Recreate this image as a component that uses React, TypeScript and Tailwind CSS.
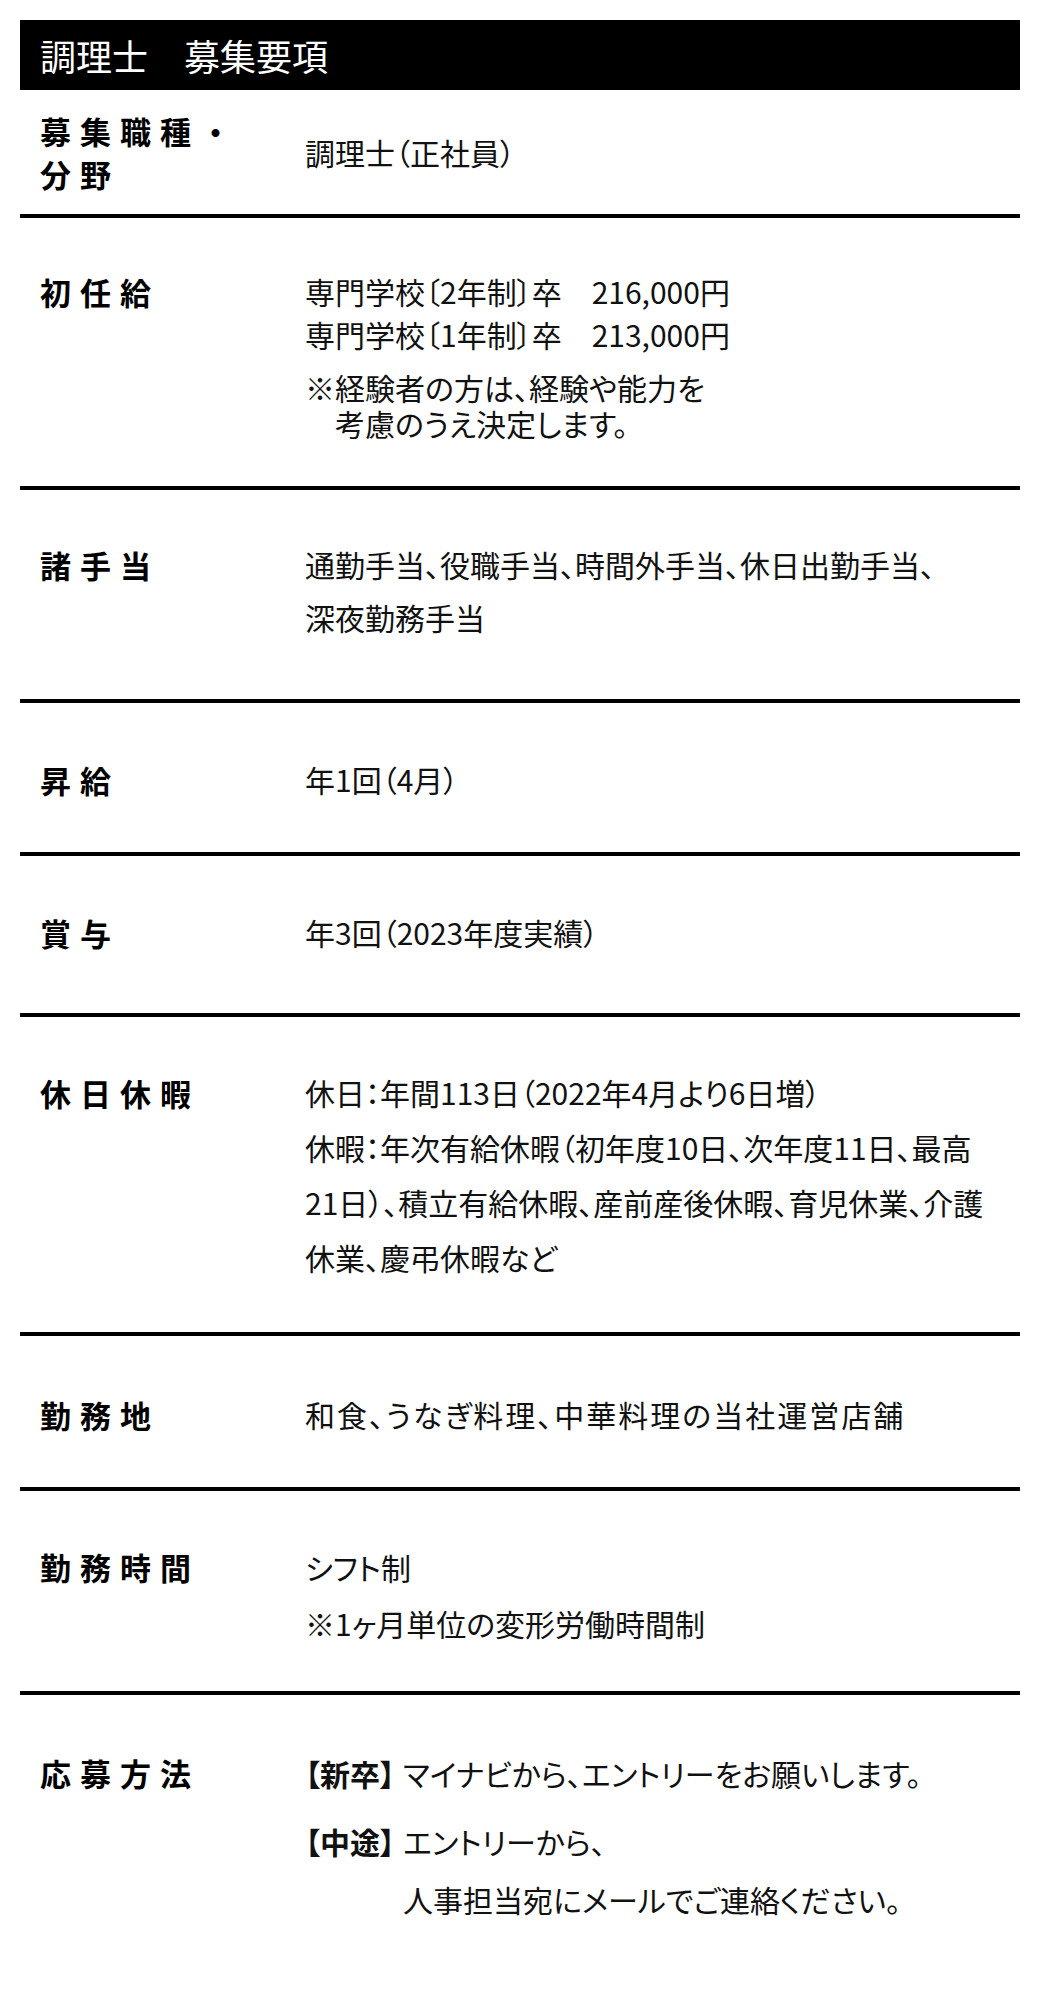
import clsx from "clsx";
import type { ReactNode } from "react";

const jp = "font-['Noto_Sans_CJK_JP','Noto_Sans',sans-serif]";

type RowProps = {
  label: ReactNode;
  pad: string;
  lead: string;
  center?: boolean;
  last?: boolean;
  children: ReactNode;
};

function Row({ label, pad, lead, center, last, children }: RowProps) {
  return (
    <div
      className={clsx(
        "flex",
        pad,
        center ? "items-center" : "items-start",
        !last && "border-b-4 border-black"
      )}
    >
      <div
        className={clsx(
          "w-[285px] shrink-0 pl-[20px] text-[31px] font-bold tracking-[9px] text-black",
          lead
        )}
      >
        {label}
      </div>
      {/* proportional punctuation, like the typeset original */}
      <div className={clsx("flex-1 text-[30px] text-[#111] [font-feature-settings:'palt']", lead)}>
        {children}
      </div>
    </div>
  );
}

export default function App() {
  return (
    <div className={clsx("min-h-[1996px] w-[1040px] bg-white px-[20px] pt-[20px]", jp)}>
      {/* Title bar */}
      <div className="flex h-[70px] items-center bg-black pl-[20px] text-[36px] font-normal leading-none text-white">
        調理士　募集要項
      </div>

      <Row
        label={
          <>
            募集職種・
            <br />
            分野
          </>
        }
        pad="py-[19px]"
        lead="leading-[43px]"
        center
      >
        調理士（正社員）
      </Row>

      <Row label="初任給" pad="pt-[52px] pb-[45px]" lead="leading-[43px]">
        <div>専門学校〔2年制〕卒　216,000円</div>
        <div>専門学校〔1年制〕卒　213,000円</div>
        <div className="mt-[13px] leading-[36px]">
          <div>※経験者の方は、経験や能力を</div>
          <div className="pl-[30px]">考慮のうえ決定します。</div>
        </div>
      </Row>

      <Row label="諸手当" pad="pt-[48px] pb-[55px]" lead="leading-[53px]">
        <div>通勤手当、役職手当、時間外手当、休日出勤手当、</div>
        <div>深夜勤務手当</div>
      </Row>

      <Row label="昇給" pad="pt-[50px] pb-[46px]" lead="leading-[53px]">
        年1回（4月）
      </Row>

      <Row label="賞与" pad="pt-[50px] pb-[54px]" lead="leading-[53px]">
        年3回（2023年度実績）
      </Row>

      <Row label="休日休暇" pad="pt-[48px] pb-[47px]" lead="leading-[55px]">
        <div>休日：年間113日（2022年4月より6日増）</div>
        <div>休暇：年次有給休暇（初年度10日、次年度11日、最高</div>
        <div>21日）、積立有給休暇、産前産後休暇、育児休業、介護</div>
        <div>休業、慶弔休暇など</div>
      </Row>

      <Row label="勤務地" pad="pt-[52px] pb-[46px]" lead="leading-[53px]">
        <span className="tracking-[2px]">和食、うなぎ料理、中華料理の当社運営店舗</span>
      </Row>

      <Row label="勤務時間" pad="pt-[48px] pb-[40px]" lead="leading-[56px]">
        <div>シフト制</div>
        <div>※1ヶ月単位の変形労働時間制</div>
      </Row>

      <Row label="応募方法" pad="pt-[49px] pb-[67px]" lead="leading-[58px]" last>
        <div className="flex">
          <span className="mr-[8px] shrink-0 font-bold">【新卒】</span>
          <span>マイナビから、エントリーをお願いします。</span>
        </div>
        <div className="mt-[10px] flex">
          <span className="mr-[8px] shrink-0 font-bold">【中途】</span>
          <div>
            <div>エントリーから、</div>
            <div>人事担当宛にメールでご連絡ください。</div>
          </div>
        </div>
      </Row>
    </div>
  );
}
